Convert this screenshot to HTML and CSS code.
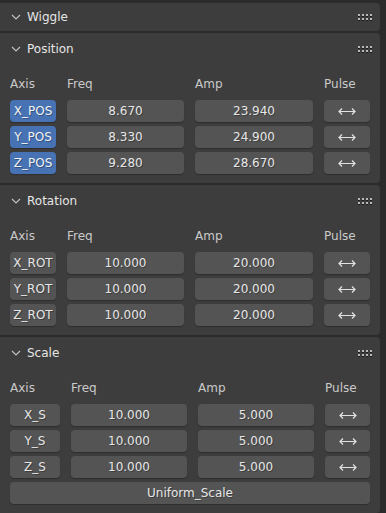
FILE: index.html
```html
<!DOCTYPE html>
<html lang="en">
<head>
    <meta charset="UTF-8">
    <meta name="viewport" content="width=device-width, initial-scale=1.0">
    <title>Wiggle</title>
    <link rel="stylesheet" href="styles.css">
</head>
<body>
    <div class="region">
        <section class="panel">
            <div class="panel-head">
                <svg class="chevron" width="10" height="6" viewBox="0 0 10 6"><path d="M1 1 5 5 9 1" fill="none" stroke="#c4c4c4" stroke-width="1.1"/></svg>
                <span>Wiggle</span>
                <svg class="grip" width="14" height="7" viewBox="0 0 14 7"><path d="M0 0h2v2H0zM4 0h2v2H4zM8 0h2v2H8zM12 0h2v2h-2zM0 4h2v2H0zM4 4h2v2H4zM8 4h2v2H8zM12 4h2v2h-2z" fill="#b8b8b8"/><path d="M0 2h2v1H0zM4 2h2v1H4zM8 2h2v1H8zM12 2h2v1h-2zM0 6h2v1H0zM4 6h2v1H4zM8 6h2v1H8zM12 6h2v1h-2z" fill="#1c1c1c"/></svg>
            </div>
        </section>

        <section class="panel sub">
            <div class="panel-head">
                <svg class="chevron" width="10" height="6" viewBox="0 0 10 6"><path d="M1 1 5 5 9 1" fill="none" stroke="#c4c4c4" stroke-width="1.1"/></svg>
                <span>Position</span>
                <svg class="grip" width="14" height="7" viewBox="0 0 14 7"><path d="M0 0h2v2H0zM4 0h2v2H4zM8 0h2v2H8zM12 0h2v2h-2zM0 4h2v2H0zM4 4h2v2H4zM8 4h2v2H8zM12 4h2v2h-2z" fill="#b8b8b8"/><path d="M0 2h2v1H0zM4 2h2v1H4zM8 2h2v1H8zM12 2h2v1h-2zM0 6h2v1H0zM4 6h2v1H4zM8 6h2v1H8zM12 6h2v1h-2z" fill="#1c1c1c"/></svg>
            </div>
            <div class="grid">
                <div class="lbl">Axis</div><div class="lbl">Freq</div><div class="lbl">Amp</div><div class="lbl">Pulse</div>

                <div class="field on">X_POS</div><div class="field num">8.670</div><div class="field num">23.940</div>
                <div class="field"><svg width="18" height="7" viewBox="0 0 18 7"><path d="M4 .5 1 3.5 4 6.5M14 .5 17 3.5 14 6.5M1 3.5h16" fill="none" stroke="#e2e2e2" stroke-width="1.2"/></svg></div>

                <div class="field on">Y_POS</div><div class="field num">8.330</div><div class="field num">24.900</div>
                <div class="field"><svg width="18" height="7" viewBox="0 0 18 7"><path d="M4 .5 1 3.5 4 6.5M14 .5 17 3.5 14 6.5M1 3.5h16" fill="none" stroke="#e2e2e2" stroke-width="1.2"/></svg></div>

                <div class="field on">Z_POS</div><div class="field num">9.280</div><div class="field num">28.670</div>
                <div class="field"><svg width="18" height="7" viewBox="0 0 18 7"><path d="M4 .5 1 3.5 4 6.5M14 .5 17 3.5 14 6.5M1 3.5h16" fill="none" stroke="#e2e2e2" stroke-width="1.2"/></svg></div>
            </div>
        </section>

        <section class="panel sub">
            <div class="panel-head">
                <svg class="chevron" width="10" height="6" viewBox="0 0 10 6"><path d="M1 1 5 5 9 1" fill="none" stroke="#c4c4c4" stroke-width="1.1"/></svg>
                <span>Rotation</span>
                <svg class="grip" width="14" height="7" viewBox="0 0 14 7"><path d="M0 0h2v2H0zM4 0h2v2H4zM8 0h2v2H8zM12 0h2v2h-2zM0 4h2v2H0zM4 4h2v2H4zM8 4h2v2H8zM12 4h2v2h-2z" fill="#b8b8b8"/><path d="M0 2h2v1H0zM4 2h2v1H4zM8 2h2v1H8zM12 2h2v1h-2zM0 6h2v1H0zM4 6h2v1H4zM8 6h2v1H8zM12 6h2v1h-2z" fill="#1c1c1c"/></svg>
            </div>
            <div class="grid">
                <div class="lbl">Axis</div><div class="lbl">Freq</div><div class="lbl">Amp</div><div class="lbl">Pulse</div>

                <div class="field">X_ROT</div><div class="field num">10.000</div><div class="field num">20.000</div>
                <div class="field"><svg width="18" height="7" viewBox="0 0 18 7"><path d="M4 .5 1 3.5 4 6.5M14 .5 17 3.5 14 6.5M1 3.5h16" fill="none" stroke="#e2e2e2" stroke-width="1.2"/></svg></div>

                <div class="field">Y_ROT</div><div class="field num">10.000</div><div class="field num">20.000</div>
                <div class="field"><svg width="18" height="7" viewBox="0 0 18 7"><path d="M4 .5 1 3.5 4 6.5M14 .5 17 3.5 14 6.5M1 3.5h16" fill="none" stroke="#e2e2e2" stroke-width="1.2"/></svg></div>

                <div class="field">Z_ROT</div><div class="field num">10.000</div><div class="field num">20.000</div>
                <div class="field"><svg width="18" height="7" viewBox="0 0 18 7"><path d="M4 .5 1 3.5 4 6.5M14 .5 17 3.5 14 6.5M1 3.5h16" fill="none" stroke="#e2e2e2" stroke-width="1.2"/></svg></div>
            </div>
        </section>

        <section class="panel sub">
            <div class="panel-head">
                <svg class="chevron" width="10" height="6" viewBox="0 0 10 6"><path d="M1 1 5 5 9 1" fill="none" stroke="#c4c4c4" stroke-width="1.1"/></svg>
                <span>Scale</span>
                <svg class="grip" width="14" height="7" viewBox="0 0 14 7"><path d="M0 0h2v2H0zM4 0h2v2H4zM8 0h2v2H8zM12 0h2v2h-2zM0 4h2v2H0zM4 4h2v2H4zM8 4h2v2H8zM12 4h2v2h-2z" fill="#b8b8b8"/><path d="M0 2h2v1H0zM4 2h2v1H4zM8 2h2v1H8zM12 2h2v1h-2zM0 6h2v1H0zM4 6h2v1H4zM8 6h2v1H8zM12 6h2v1h-2z" fill="#1c1c1c"/></svg>
            </div>
            <div class="grid scale">
                <div class="lbl">Axis</div><div class="lbl">Freq</div><div class="lbl">Amp</div><div class="lbl">Pulse</div>

                <div class="field">X_S</div><div class="field num">10.000</div><div class="field num">5.000</div>
                <div class="field"><svg width="18" height="7" viewBox="0 0 18 7"><path d="M4 .5 1 3.5 4 6.5M14 .5 17 3.5 14 6.5M1 3.5h16" fill="none" stroke="#e2e2e2" stroke-width="1.2"/></svg></div>

                <div class="field">Y_S</div><div class="field num">10.000</div><div class="field num">5.000</div>
                <div class="field"><svg width="18" height="7" viewBox="0 0 18 7"><path d="M4 .5 1 3.5 4 6.5M14 .5 17 3.5 14 6.5M1 3.5h16" fill="none" stroke="#e2e2e2" stroke-width="1.2"/></svg></div>

                <div class="field">Z_S</div><div class="field num">10.000</div><div class="field num">5.000</div>
                <div class="field"><svg width="18" height="7" viewBox="0 0 18 7"><path d="M4 .5 1 3.5 4 6.5M14 .5 17 3.5 14 6.5M1 3.5h16" fill="none" stroke="#e2e2e2" stroke-width="1.2"/></svg></div>

                <div class="field wide">Uniform_Scale</div>
            </div>
        </section>
    </div>
</body>
</html>
```

FILE: styles.css
```css
body {
    margin: 0;
    padding: 0;
    width: 386px;
    height: 513px;
    overflow: hidden;
    background-color: #2b2b2b;
    font-family: "DejaVu Sans", sans-serif;
    font-size: 12px;
    color: #e6e6e6;
}

.region {
    display: flex;
    flex-direction: column;
    gap: 2px;
    padding: 3px 6px 0 0;
}

.panel {
    background-color: #3d3d3d;
    border-radius: 0 4px 4px 0;
}

.panel-head {
    display: flex;
    align-items: center;
    height: 28px;
    padding: 0 8px 0 11px;
}

.sub .panel-head {
    height: 32px;
}

.chevron {
    margin-right: 6px;
}

.grip {
    margin-left: auto;
}

.grid {
    display: grid;
    grid-template-columns: 46px 117px 118px 46px;
    grid-auto-rows: 22px;
    column-gap: 11px;
    row-gap: 4px;
    padding: 9px 10px;
}

.grid.scale {
    grid-template-columns: 50px 116px 116px 45px;
}

.lbl {
    color: #cacaca;
    line-height: 20px;
}

.field {
    display: flex;
    align-items: center;
    justify-content: center;
    background-color: #545454;
    border-radius: 4px;
    box-shadow: 0 1px 1px rgba(0, 0, 0, 0.25);
    text-shadow: 1px 1px 0 rgba(0, 0, 0, 0.3);
    white-space: nowrap;
}

.field.on {
    background-color: #4772b3;
    color: #f2f2f2;
}

.field.wide {
    grid-column: 1 / -1;
}
```
